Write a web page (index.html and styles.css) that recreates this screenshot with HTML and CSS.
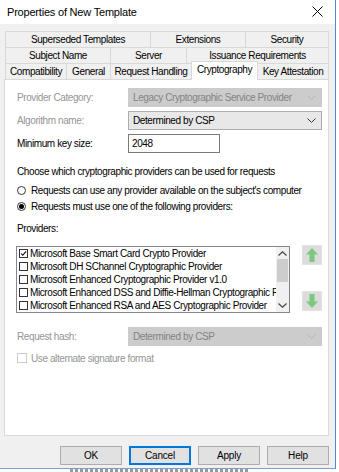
FILE: index.html
```html
<!DOCTYPE html>
<html lang="en">
<head>
  <meta charset="UTF-8">
  <meta name="viewport" content="width=device-width, initial-scale=1.0">
  <title>Properties of New Template</title>
  <link rel="stylesheet" href="styles.css">
</head>
<body>
  <div class="window">
    <div class="titlebar">
      <span class="title">Properties of New Template</span>
      <svg class="close" width="11" height="11" viewBox="0 0 11 11">
        <path d="M0.5 0.5 L10.5 10.5 M10.5 0.5 L0.5 10.5" stroke="#000" stroke-width="1" fill="none"/>
      </svg>
    </div>

    <div class="dialog">
      <div class="tabs">
        <div class="tab-row row-1">
          <div class="tab">Superseded Templates</div>
          <div class="tab">Extensions</div>
          <div class="tab tab-last">Security</div>
        </div>
        <div class="tab-row row-2">
          <div class="tab">Subject Name</div>
          <div class="tab">Server</div>
          <div class="tab tab-last">Issuance Requirements</div>
        </div>
        <div class="tab-row row-3">
          <div class="tab">Compatibility</div>
          <div class="tab">General</div>
          <div class="tab">Request Handling</div>
          <div class="tab tab-active">Cryptography</div>
          <div class="tab tab-last">Key Attestation</div>
        </div>
      </div>

      <div class="panel">
        <div class="field">
          <span class="field-label muted">Provider Category:</span>
          <div class="combo combo-disabled">
            <span>Legacy Cryptographic Service Provider</span>
            <svg width="9" height="5" viewBox="0 0 9 5"><path d="M0.5 0.5 L4.5 4.5 L8.5 0.5" stroke="#b5b5b5" fill="none"/></svg>
          </div>
        </div>
        <div class="field">
          <span class="field-label muted">Algorithm name:</span>
          <div class="combo">
            <span>Determined by CSP</span>
            <svg width="9" height="5" viewBox="0 0 9 5"><path d="M0.5 0.5 L4.5 4.5 L8.5 0.5" stroke="#333" fill="none"/></svg>
          </div>
        </div>
        <div class="field">
          <span class="field-label">Minimum key size:</span>
          <div class="textbox">2048</div>
        </div>

        <p class="intro">Choose which cryptographic providers can be used for requests</p>

        <div class="radio-row">
          <span class="radio"></span>
          <span>Requests can use any provider available on the subject's computer</span>
        </div>
        <div class="radio-row">
          <span class="radio radio-on"></span>
          <span>Requests must use one of the following providers:</span>
        </div>

        <p class="providers-label">Providers:</p>

        <div class="list-area">
          <div class="listbox">
            <div class="list-items">
              <div class="item">
                <span class="cb">
                  <svg width="9" height="9" viewBox="0 0 9 9"><path d="M1.5 4.5 L3.5 6.8 L7.8 1.8" stroke="#000" stroke-width="1.4" fill="none"/></svg>
                </span>
                <span>Microsoft Base Smart Card Crypto Provider</span>
              </div>
              <div class="item"><span class="cb"></span><span>Microsoft DH SChannel Cryptographic Provider</span></div>
              <div class="item"><span class="cb"></span><span>Microsoft Enhanced Cryptographic Provider v1.0</span></div>
              <div class="item"><span class="cb"></span><span>Microsoft Enhanced DSS and Diffie-Hellman Cryptographic Provider</span></div>
              <div class="item"><span class="cb"></span><span>Microsoft Enhanced RSA and AES Cryptographic Provider</span></div>
            </div>
            <div class="scrollbar">
              <svg width="9" height="5" viewBox="0 0 9 5"><path d="M0.5 4.5 L4.5 0.8 L8.5 4.5" stroke="#444" stroke-width="1.2" fill="none"/></svg>
              <div class="track"><div class="thumb"></div></div>
              <svg width="9" height="5" viewBox="0 0 9 5"><path d="M0.5 0.5 L4.5 4.2 L8.5 0.5" stroke="#444" stroke-width="1.2" fill="none"/></svg>
            </div>
          </div>
          <div class="move-buttons">
            <div class="move-btn">
              <svg width="14" height="16" viewBox="0 0 14 16"><path d="M7 1 L13 7.5 L9.5 7.5 L9.5 15 L4.5 15 L4.5 7.5 L1 7.5 Z" fill="#7cc97c"/></svg>
            </div>
            <div class="move-btn">
              <svg width="14" height="16" viewBox="0 0 14 16"><path d="M7 15 L13 8.5 L9.5 8.5 L9.5 1 L4.5 1 L4.5 8.5 L1 8.5 Z" fill="#7cc97c"/></svg>
            </div>
          </div>
        </div>

        <div class="field field-hash">
          <span class="field-label muted">Request hash:</span>
          <div class="combo combo-disabled">
            <span>Determined by CSP</span>
            <svg width="9" height="5" viewBox="0 0 9 5"><path d="M0.5 0.5 L4.5 4.5 L8.5 0.5" stroke="#b5b5b5" fill="none"/></svg>
          </div>
        </div>

        <div class="check-row muted">
          <span class="cb cb-disabled"></span>
          <span>Use alternate signature format</span>
        </div>
      </div>

      <div class="buttons">
        <button class="btn">OK</button>
        <button class="btn btn-focus">Cancel</button>
        <button class="btn">Apply</button>
        <button class="btn">Help</button>
      </div>
    </div>
  </div>
  <div class="backdrop"></div>
</body>
</html>
```

FILE: styles.css
```css
* {
  margin: 0;
  padding: 0;
  box-sizing: border-box;
}
body {
  font-family: "Liberation Sans", Arial, sans-serif;
  font-size: 10px;
  letter-spacing: -0.4px;
  color: #000;
  background-color: #fff;
  width: 339px;
  height: 472px;
  overflow: hidden;
}
.window {
  width: 336px;
  height: 469px;
  background-color: #f0f0f0;
  border-right: 1px solid #4f8ad0;
  border-bottom: 1px solid #7d9ec8;
  display: flex;
  flex-direction: column;
}
.titlebar {
  height: 24px;
  background-color: #fff;
  display: flex;
  align-items: center;
  justify-content: space-between;
  padding: 0 12px 1px 7px;
}
.title {
  font-size: 11px;
  letter-spacing: -0.2px;
}
.dialog {
  flex: 1;
  display: flex;
  flex-direction: column;
  padding: 7px 6px 0 4px;
}
.tabs {
  padding-left: 1px;
}
.tab-row {
  display: grid;
  height: 16px;
}
.row-1 {
  grid-template-columns: 145px 95px 1fr;
}
.row-2 {
  grid-template-columns: 105px 76px 1fr;
}
.row-3 {
  grid-template-columns: 61px 44px 81px 67px 1fr;
}
.tab {
  border: 1px solid #d9d9d9;
  border-right: none;
  border-bottom: none;
  text-align: center;
  line-height: 15px;
  white-space: nowrap;
  overflow: hidden;
}
.tab-last {
  border-right: 1px solid #d9d9d9;
}
.tab-active {
  background-color: #fff;
  border-right: 1px solid #d9d9d9;
  margin-top: -2px;
  margin-bottom: -1px;
  line-height: 16px;
  position: relative;
  z-index: 1;
}
.tab-active + .tab {
  border-left: none;
}
.panel {
  height: 357px;
  background-color: #fff;
  border: 1px solid #d9d9d9;
  padding: 8px 6px 0 12px;
}
.muted {
  color: #959595;
}
.field {
  display: flex;
  align-items: center;
  height: 19px;
  margin-bottom: 4px;
}
.field-label {
  width: 111px;
}
.combo {
  width: 194px;
  height: 19px;
  border: 1px solid #adadad;
  background-color: #e8e8e8;
  display: flex;
  align-items: center;
  justify-content: space-between;
  padding: 0 5px 0 4px;
  white-space: nowrap;
}
.combo-disabled {
  background-color: #cccccc;
  border-color: #cccccc;
  color: #838383;
}
.textbox {
  width: 92px;
  height: 19px;
  border: 1px solid #7a7a7a;
  background-color: #fff;
  padding-left: 3px;
  line-height: 17px;
}
.intro {
  margin-top: 12px;
  line-height: 14px;
  white-space: nowrap;
}
.radio-row {
  display: flex;
  align-items: center;
  height: 16px;
  white-space: nowrap;
}
.intro + .radio-row {
  margin-top: 3px;
}
.radio {
  flex: none;
  width: 9px;
  height: 9px;
  border: 1px solid #333;
  border-radius: 50%;
  margin-right: 5px;
  display: flex;
  align-items: center;
  justify-content: center;
}
.radio-on::after {
  content: "";
  width: 5px;
  height: 5px;
  border-radius: 50%;
  background-color: #000;
}
.providers-label {
  margin-top: 8px;
  line-height: 14px;
}
.list-area {
  display: flex;
  margin-top: 9px;
  margin-left: -1px;
  gap: 12px;
}
.listbox {
  width: 274px;
  height: 67px;
  margin-top: 1px;
  border: 1px solid #828790;
  background-color: #fff;
  display: flex;
}
.list-items {
  flex: 1;
  overflow: hidden;
  padding-left: 2px;
}
.item {
  height: 13px;
  display: flex;
  align-items: center;
  white-space: nowrap;
}
.cb {
  flex: none;
  width: 9px;
  height: 9px;
  border: 1px solid #333;
  margin-right: 2px;
  display: flex;
  align-items: center;
  justify-content: center;
}
.cb svg {
  margin-top: -1px;
}
.scrollbar {
  flex: none;
  width: 13px;
  background-color: #f0f0f0;
  display: flex;
  flex-direction: column;
  align-items: center;
  justify-content: space-between;
  padding: 4px 0;
}
.track {
  flex: 1;
  width: 100%;
  padding: 3px 1px 0;
}
.thumb {
  height: 23px;
  background-color: #cdcdcd;
}
.move-buttons {
  display: flex;
  flex-direction: column;
  justify-content: space-between;
  height: 66px;
}
.move-btn {
  width: 20px;
  height: 20px;
  background-color: #dcdcdc;
  border: 1px solid #e3e3e3;
  display: flex;
  align-items: center;
  justify-content: center;
}
.field-hash {
  margin-top: 14px;
}
.check-row {
  display: flex;
  align-items: center;
  height: 14px;
  margin-top: 5px;
}
.cb-disabled {
  width: 10px;
  height: 10px;
  border-color: #cccccc;
  margin-right: 4px;
}
.buttons {
  display: flex;
  justify-content: flex-end;
  gap: 7px;
  margin-top: 10px;
}
.btn {
  width: 62px;
  height: 19px;
  font-family: inherit;
  font-size: 10px;
  letter-spacing: -0.2px;
  background-color: #e1e1e1;
  border: 1px solid #adadad;
  color: #000;
}
.btn-focus {
  border: 2px solid #0078d7;
}
.backdrop {
  height: 3px;
  margin-left: 70px;
  width: 180px;
  background: repeating-linear-gradient(90deg, #555 0 3px, #fff 3px 5px);
  opacity: 0.6;
}
```
